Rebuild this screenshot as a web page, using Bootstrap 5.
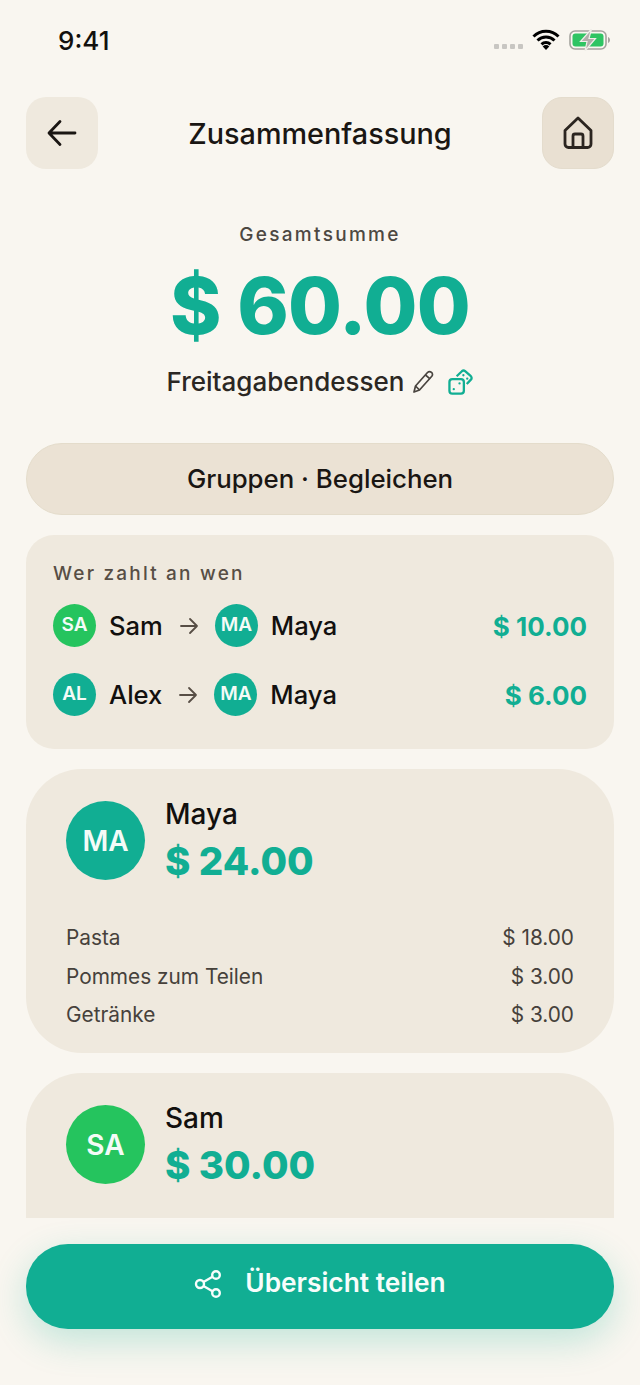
<!DOCTYPE html>
<html lang="de">
<head>
<meta charset="UTF-8">
<meta name="viewport" content="width=device-width, initial-scale=1.0">
<title>Zusammenfassung</title>
<link href="https://cdn.jsdelivr.net/npm/bootstrap@5.3.0/dist/css/bootstrap.min.css" rel="stylesheet">
<style>
html, body { margin: 0; height: 1385px; overflow: hidden; }
body { background: #f9f6f0; font-family: Inter, "Liberation Sans", sans-serif; color: #1a1613; }
.app-shell { width: 640px; height: 1385px; }
.scroll-part { height: 1218px; overflow: hidden; padding: 0 26px; }
.status-row { height: 97px; padding: 25px 3px 0 32px; align-items: flex-start; }
.clock { font-size: 26px; font-weight: 500; line-height: 32px; color: #12100e; }
.status-icons { height: 32px; margin-top: -1px; gap: 9px; }
.sig-dots { gap: 3px; margin-top: 12px; }
.sig-dot { width: 5px; height: 5px; background: #c8c6c2; border-radius: 1px; }
.head-btn { width: 72px; height: 72px; border-radius: 20px; border: 0; background: #efe9de; padding: 0; }
.head-btn.home-btn { background: #e9e0d2; border: 1px solid #e4dccd; }
.page-title { font-size: 28.8px; font-weight: 500; margin: 2px 0 0; color: #1a1613; }
.total-block { padding-top: 52px; height: 274px; }
.total-label { font-size: 19px; font-weight: 500; letter-spacing: 2.3px; color: #4d4842; line-height: 28px; }
.total-sum { font-size: 78px; font-weight: 800; color: #11ae93; line-height: 94px; margin-top: 10px; letter-spacing: -.7px; }
.bill-name { font-size: 26px; font-weight: 500; color: #2b2723; line-height: 34px; margin-top: 12px; }
.pencil-icon { margin-left: 8px; }
.dice-icon { margin-left: 14px; }
.group-pill { height: 72px; border-radius: 36px; background: #ebe2d4; border: 1px solid #e4dccb; font-size: 25.8px; font-weight: 500; color: #1a1613; width: 100%; }
.debt-box { background: #efe9de; border-radius: 28px; height: 214px; margin-top: 20px; padding: 27px 27px 0; }
.debt-title { font-size: 19px; font-weight: 500; letter-spacing: 2.2px; color: #574e45; line-height: 24px; margin-bottom: 18px; }
.debt-line { height: 43px; margin-bottom: 26px; }
.avatar-sm { width: 43px; height: 43px; border-radius: 50%; color: #f4fbf7; font-size: 19px; font-weight: 600; flex: none; }
.av-teal { background: #11ae93; }
.av-green { background: #25c45e; }
.debt-name { font-size: 25.6px; font-weight: 500; color: #12100e; margin-left: 13px; padding-top: 2px; }
.debt-arrow { margin: 0 16px; flex: none; }
.debt-sum { font-size: 26px; font-weight: 700; color: #11ae93; margin-left: auto; padding-top: 2px; }
.person-box { background: #efe9de; border-radius: 56px; margin-top: 20px; padding: 32px 40px 0; height: 284px; }
.person-box.cut-box { height: 240px; }
.person-top { gap: 20px; }
.avatar-lg { width: 79px; height: 79px; border-radius: 50%; color: #f4fbf7; font-size: 28px; font-weight: 600; flex: none; }
.person-name { font-size: 28px; font-weight: 500; line-height: 34px; color: #12100e; margin-top: -4px; }
.person-sum { font-size: 38.500px; font-weight: 800; color: #11ae93; line-height: 52px; margin-top: 4px; }
.item-list { margin-top: 32px; }
.item-line { font-size: 20.8px; line-height: 38.5px; color: #46413b; }
.bottom-part { height: 167px; padding: 26px 26px 0; }
.share-btn { height: 85px; width: 100%; border-radius: 42px; background: #11ae93; border: 0; color: #f7fdfb; font-size: 26.3px; font-weight: 600; box-shadow: 0 12px 36px rgba(17,174,147,.24); gap: 23px; padding: 0 0 5px; }
.share-btn span { margin-bottom: 3px; }
</style>
</head>
<body>
<div class="app-shell d-flex flex-column">
  <div class="scroll-part">
    <div class="status-row d-flex justify-content-between">
      <div class="clock">9:41</div>
      <div class="status-icons d-flex align-items-center">
        <div class="sig-dots d-flex"><span class="sig-dot"></span><span class="sig-dot"></span><span class="sig-dot"></span><span class="sig-dot"></span></div>
        <svg width="28" height="22" viewBox="0 0 28 22"><path d="M1.500 7.500a17.500 17.500 0 0 1 25 0M5.500 11.500a12 12 0 0 1 17 0M9.500 15.300a6.500 6.500 0 0 1 9 0" fill="none" stroke="#000" stroke-width="3"/><path d="M14 21l-3.300-3.600a4.600 4.600 0 0 1 6.600 0z" fill="#000"/></svg>
        <svg width="42" height="22" viewBox="0 0 42 22"><rect x="1" y="2" width="36" height="18" rx="5" fill="none" stroke="#a5a39e" stroke-width="1.600"/><rect x="3.500" y="4.500" width="31" height="13" rx="3" fill="#2fc463"/><path d="M39 8v6c1.400-.5 2-1.600 2-3s-.6-2.500-2-3z" fill="#a5a39e"/><path d="M22.500 0L11.500 12.500h6.500L16 22l10.500-12.500H20z" fill="#b0aeaa" stroke="#f0eee9" stroke-width="1.200"/></svg>
      </div>
    </div>
    <div class="d-flex justify-content-between align-items-center">
      <button class="head-btn d-flex align-items-center justify-content-center" type="button">
        <svg width="32" height="32" viewBox="0 0 32 32" fill="none" stroke="#1a1613" stroke-width="2.800" stroke-linecap="round" stroke-linejoin="round"><path d="M29 16H4M14 4.500L3 16l11 11.500"/></svg>
      </button>
      <h1 class="page-title">Zusammenfassung</h1>
      <button class="head-btn home-btn d-flex align-items-center justify-content-center" type="button">
        <svg width="32" height="34" viewBox="0 0 32 34" fill="none" stroke="#2b2520" stroke-width="2.800" stroke-linejoin="round"><path d="M3 14.500L16 2l13 12.500V28a3.500 3.500 0 0 1-3.500 3.500h-19A3.500 3.500 0 0 1 3 28z"/><path d="M11 31.500V20a2 2 0 0 1 2-2h6a2 2 0 0 1 2 2v11.500"/></svg>
      </button>
    </div>
    <div class="total-block text-center">
      <div class="total-label">Gesamtsumme</div>
      <div class="total-sum">$ 60.00</div>
      <div class="bill-name d-flex justify-content-center align-items-center">
        <span>Freitagabendessen</span>
        <svg class="pencil-icon" width="22" height="24" viewBox="0 0 22 24" fill="none" stroke="#4a4540" stroke-width="1.700" stroke-linejoin="round"><path d="M2 22l1.500-6L15.500 2.500c1-1 2.800-1.100 4-.1s1.300 2.800.3 3.900L7.500 20z"/><path d="M3.500 16l4 4M13.500 5l4.500 3.800"/></svg>
        <svg class="dice-icon" width="25" height="26" viewBox="0 0 26 26" fill="none" stroke="#11ae93" stroke-width="2.400" stroke-linejoin="round"><rect x="1.500" y="10" width="15" height="15" rx="3"/><path d="M9 7l5.500-5.200a2.500 2.500 0 0 1 3.300 0l6 5.200a2.400 2.400 0 0 1 0 3.500l-4.300 4.500"/><circle cx="6" cy="20.500" r="1.200" fill="#11ae93" stroke="none"/><circle cx="12" cy="14.500" r="1.200" fill="#11ae93" stroke="none"/><circle cx="16" cy="6" r="1.200" fill="#11ae93" stroke="none"/><circle cx="20" cy="9.500" r="1.200" fill="#11ae93" stroke="none"/></svg>
      </div>
    </div>
    <button class="group-pill" type="button">Gruppen · Begleichen</button>
    <div class="debt-box">
      <div class="debt-title">Wer zahlt an wen</div>
      <div class="debt-line d-flex align-items-center">
        <div class="avatar-sm av-green d-flex align-items-center justify-content-center">SA</div>
        <span class="debt-name">Sam</span>
        <svg class="debt-arrow" width="20" height="18" viewBox="0 0 20 18" fill="none" stroke="#574e45" stroke-width="1.800" stroke-linecap="round" stroke-linejoin="round"><path d="M2 9h16M11 2l7 7-7 7"/></svg>
        <div class="avatar-sm av-teal d-flex align-items-center justify-content-center">MA</div>
        <span class="debt-name">Maya</span>
        <span class="debt-sum">$ 10.00</span>
      </div>
      <div class="debt-line d-flex align-items-center">
        <div class="avatar-sm av-teal d-flex align-items-center justify-content-center">AL</div>
        <span class="debt-name">Alex</span>
        <svg class="debt-arrow" width="20" height="18" viewBox="0 0 20 18" fill="none" stroke="#574e45" stroke-width="1.800" stroke-linecap="round" stroke-linejoin="round"><path d="M2 9h16M11 2l7 7-7 7"/></svg>
        <div class="avatar-sm av-teal d-flex align-items-center justify-content-center">MA</div>
        <span class="debt-name">Maya</span>
        <span class="debt-sum">$ 6.00</span>
      </div>
    </div>
    <div class="person-box">
      <div class="person-top d-flex">
        <div class="avatar-lg av-teal d-flex align-items-center justify-content-center">MA</div>
        <div>
          <div class="person-name">Maya</div>
          <div class="person-sum">$ 24.00</div>
        </div>
      </div>
      <div class="item-list">
        <div class="item-line d-flex justify-content-between"><span>Pasta</span><span>$ 18.00</span></div>
        <div class="item-line d-flex justify-content-between"><span>Pommes zum Teilen</span><span>$ 3.00</span></div>
        <div class="item-line d-flex justify-content-between"><span>Getränke</span><span>$ 3.00</span></div>
      </div>
    </div>
    <div class="person-box cut-box">
      <div class="person-top d-flex">
        <div class="avatar-lg av-green d-flex align-items-center justify-content-center">SA</div>
        <div>
          <div class="person-name">Sam</div>
          <div class="person-sum">$ 30.00</div>
        </div>
      </div>
    </div>
  </div>
  <div class="bottom-part">
    <button class="share-btn d-flex align-items-center justify-content-center" type="button">
      <svg width="28" height="28" viewBox="0 0 28 28" fill="none" stroke="#f7fdfb" stroke-width="2.400"><circle cx="6" cy="14" r="4"/><circle cx="22" cy="5" r="3.800"/><circle cx="22" cy="23" r="3.800"/><path d="M9.500 12l9-5.200M9.500 16l9 5.200"/></svg>
      <span>Übersicht teilen</span>
    </button>
  </div>
</div>
<script src="https://cdn.jsdelivr.net/npm/bootstrap@5.3.0/dist/js/bootstrap.bundle.min.js"></script>
</body>
</html>
